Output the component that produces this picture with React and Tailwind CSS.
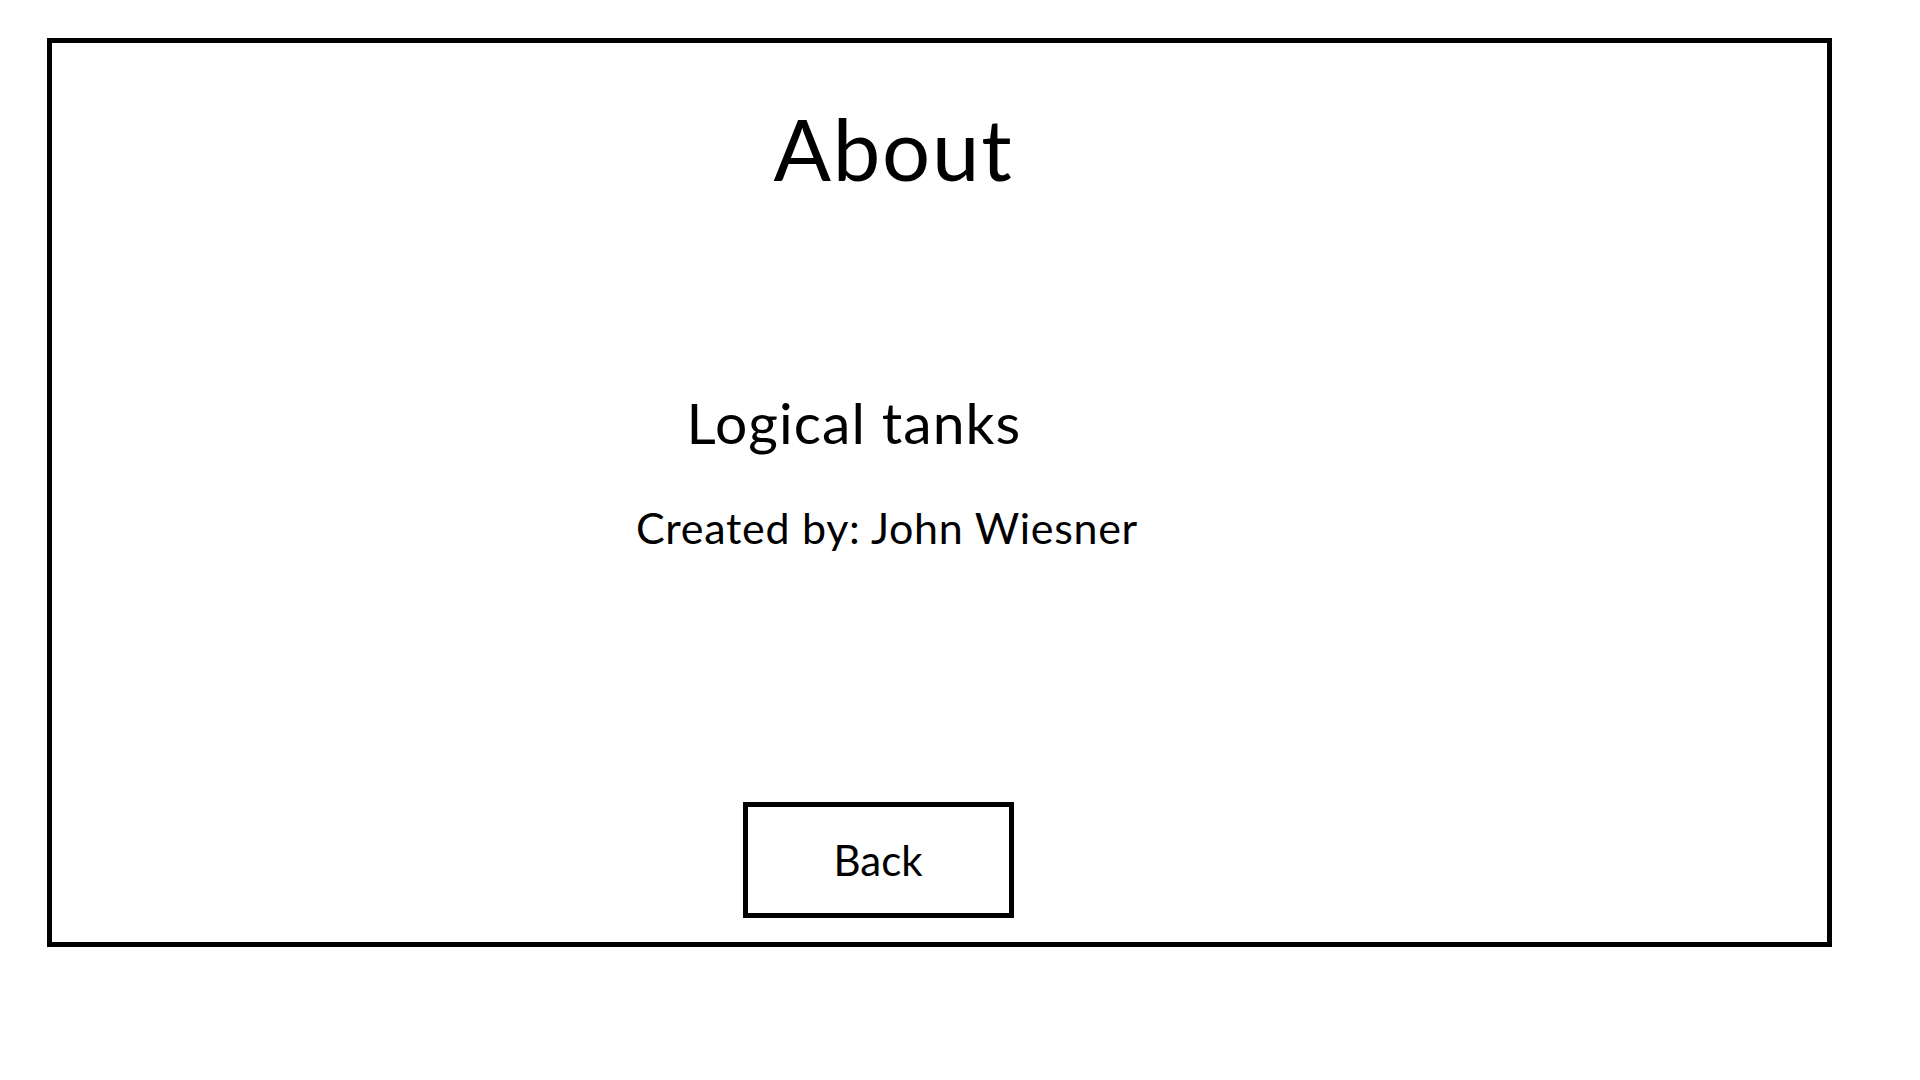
import React from 'react';

const App = () => {
    return (
        <div className="w-[1920px] h-[1080px] bg-white pt-[38px] pl-[47px]" style={{ fontFamily: 'Lato, "Open Sans", sans-serif' }}>
            {/* About panel */}
            <div className="w-[1785px] h-[909px] border-[5px] border-black flex flex-col text-black">
                <h1 className="mt-[63px] flex justify-center pr-[92px] text-[85px] leading-none font-normal tracking-[1.8px]">
                    About
                </h1>
                <h2 className="mt-[203px] flex justify-center pr-[171px] text-[57px] leading-none font-normal tracking-[1.1px]">
                    Logical tanks
                </h2>
                <p className="mt-[55px] flex justify-center pr-[105px] text-[43px] leading-none tracking-[0.7px]">
                    Created by: John Wiesner
                </p>
                <div className="mt-[253px] flex justify-center pr-[123px]">
                    <button className="w-[271px] h-[116px] border-[5px] border-black bg-white text-[42px] leading-none flex items-center justify-center">
                        Back
                    </button>
                </div>
            </div>
        </div>
    );
};

export default App;
